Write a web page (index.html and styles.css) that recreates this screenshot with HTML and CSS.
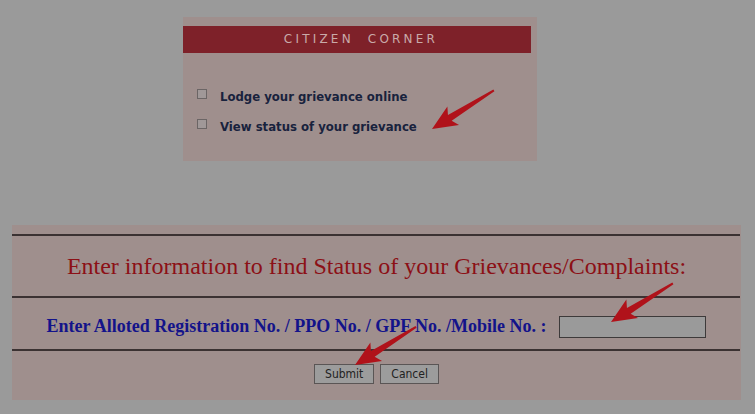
FILE: index.html
```html
<!DOCTYPE html>
<html lang="en">
  <head>
    <meta charset="UTF-8" />
    <title>Citizen Corner</title>
    <link rel="stylesheet" href="styles.css">
  </head>
  <body>
    <div class="citizen-box">
      <div class="citizen-head">CITIZEN&nbsp;&nbsp;CORNER</div>
      <ul class="citizen-list">
        <li><span class="tick"></span>Lodge your grievance online</li>
        <li><span class="tick"></span>View status of your grievance</li>
      </ul>
    </div>

    <div class="status-panel">
      <div class="rule"></div>
      <h2 class="status-title">Enter information to find Status of your Grievances/Complaints:</h2>
      <div class="rule"></div>
      <div class="status-row">
        <label for="regno">Enter Alloted Registration No. / PPO No. / GPF No. /Mobile No. :</label>
        <input type="text" id="regno" />
      </div>
      <div class="rule"></div>
      <div class="status-buttons">
        <button>Submit</button>
        <button>Cancel</button>
      </div>
    </div>

    <!-- annotation arrows drawn over the screenshot -->
    <svg class="arrows" width="755" height="414" viewBox="0 0 755 414">
      <g fill="#b0121a">
        <polygon transform="translate(432 129) rotate(-32)" points="0,0 25,-11 21,-3.5 73,-1 73,1 21,3.5 25,11" />
        <polygon transform="translate(611 322) rotate(-32)" points="0,0 25,-11 21,-3.5 73,-1 73,1 21,3.5 25,11" />
        <polygon transform="translate(355 365) rotate(-32)" points="0,0 25,-11 21,-3.5 72,-1 72,1 21,3.5 25,11" />
      </g>
    </svg>
  </body>
</html>
```

FILE: styles.css
```css
* {
  margin: 0;
  padding: 0;
  box-sizing: border-box;
}
html, body {
  height: 100%;
}
body {
  background-color: #9a9a9a;
  font-family: "DejaVu Sans", Verdana, sans-serif;
  padding-top: 17px;
  position: relative;
  overflow: hidden;
}

.citizen-box {
  margin-left: 183px;
  width: 354px;
  height: 144px;
  background-color: #9f8f8d;
  padding-top: 9px;
}

.citizen-head {
  width: 348px;
  height: 27px;
  line-height: 27px;
  background-color: #7e2129;
  color: #c9aaa9;
  font-size: 12px;
  letter-spacing: 3.2px;
  text-align: center;
  padding-left: 8px;
}

.citizen-list {
  list-style: none;
  margin-top: 34px;
  padding-left: 14px;
}

.citizen-list li {
  display: flex;
  align-items: center;
  height: 20px;
  margin-bottom: 10px;
  font-size: 11.7px;
  font-weight: bold;
  color: #18223d;
}

.tick {
  width: 10px;
  height: 10px;
  border: 1px solid #6b6565;
  background-color: #a09898;
  margin-right: 13px;
  margin-top: -6px;
}

.status-panel {
  margin-top: 64px;
  margin-left: 12px;
  width: 729px;
  height: 175px;
  background-color: #9f8f8d;
  padding-top: 9px;
}

.rule {
  height: 2px;
  background-color: #3b3232;
  margin-right: 1px;
}

.status-title {
  height: 60px;
  line-height: 60px;
  text-align: center;
  font-family: "Liberation Serif", "Times New Roman", serif;
  font-weight: normal;
  font-size: 24px;
  color: #8c1016;
}

.status-row {
  height: 51px;
  padding-top: 6px;
  display: flex;
  justify-content: center;
  align-items: center;
  gap: 13px;
}

.status-row label {
  font-family: "Liberation Serif", "Times New Roman", serif;
  font-weight: bold;
  font-size: 18px;
  color: #13138a;
}

.status-row input {
  width: 147px;
  height: 22px;
  background-color: #9a9a9a;
  border: 1px solid #3d3a3a;
}

.status-buttons {
  display: flex;
  justify-content: center;
  gap: 6px;
  margin-top: 13px;
}

.status-buttons button {
  height: 20px;
  padding: 0 10px;
  background-color: #9c9c9c;
  border: 1px solid #5a5555;
  font-family: "DejaVu Sans Condensed", "DejaVu Sans", sans-serif;
  font-size: 12px;
  color: #222;
}

.arrows {
  position: absolute;
  left: 0;
  top: 0;
  pointer-events: none;
}
```
